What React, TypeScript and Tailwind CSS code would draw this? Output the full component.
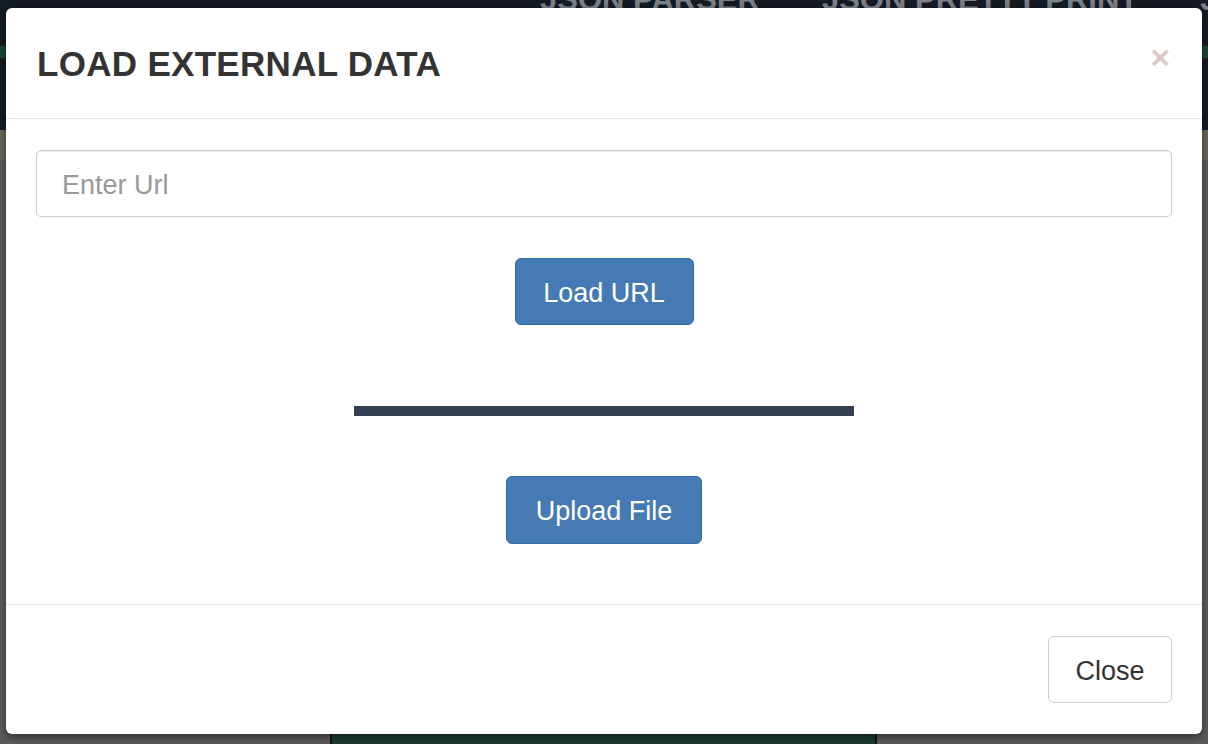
export default function App() {
  const font = { fontFamily: '"Liberation Sans", Arial, Helvetica, sans-serif' };
  return (
    <div className="relative w-[1208px] h-[744px] overflow-hidden bg-[#5b5b5b]" style={font}>
      {/* dimmed background page */}
      <div className="flex flex-col w-full h-full">
        <div className="relative h-[130px] bg-[#151b22] shrink-0">
          <div className="absolute left-0 right-0 top-[46px] h-[12px] bg-[#1d4637]" />
          <div className="absolute top-[-23px] left-[540px] flex gap-[62px] text-[31px] font-bold text-[#7c8187] whitespace-nowrap">
            <span>JSON PARSER</span>
            <span>JSON PRETTY PRINT</span>
            <span>J</span>
          </div>
        </div>
        <div className="h-[30px] bg-[#6a6955] shrink-0" />
        <div className="flex-1 bg-[#5c5c5c] flex flex-col justify-end">
          <div className="ml-[330px] w-[547px] h-[12px] bg-[#1c3c32] border-x-2 border-[#111]" />
        </div>
      </div>

      {/* modal */}
      <div className="absolute left-[6px] top-[8px] w-[1196px] h-[726px] bg-white rounded-[6px] shadow-[0_3px_9px_rgba(0,0,0,0.5)] flex flex-col">
        <div className="h-[111px] shrink-0 flex items-center justify-between pl-[31px] pr-[32px] border-b border-[#e5e5e5]">
          <h4 className="text-[35px] font-bold text-[#333] leading-none tracking-[0.3px] mt-[1px]">LOAD EXTERNAL DATA</h4>
          <span className="text-[#dcc9c9] text-[34px] font-bold leading-none mt-[-13px]">×</span>
        </div>
        <div className="flex flex-col items-center px-[30px] pt-[31px]">
          <div className="w-full h-[67px] border border-[#cccccc] rounded-[5px] flex items-center pl-[25px] pt-[3px] text-[27px] text-[#999] shadow-[inset_0_1px_1px_rgba(0,0,0,0.075)]">
            Enter Url
          </div>
          <button className="mt-[41px] w-[179px] h-[67px] rounded-[6px] bg-[#457ab4] border border-[#2e6da4] text-white text-[27px] pt-[3px]">
            Load URL
          </button>
          <div className="mt-[81px] w-[500px] h-[10px] bg-[#334052]" />
          <button className="mt-[60px] w-[196px] h-[68px] rounded-[6px] bg-[#457ab4] border border-[#2e6da4] text-white text-[27px] pt-[3px]">
            Upload File
          </button>
        </div>
        <div className="mt-[60px] border-t border-[#e5e5e5] flex justify-end px-[30px] pt-[31px]">
          <button className="w-[124px] h-[67px] rounded-[6px] bg-white border border-[#cccccc] text-[#333] text-[27px] pt-[3px]">
            Close
          </button>
        </div>
      </div>
    </div>
  );
}
